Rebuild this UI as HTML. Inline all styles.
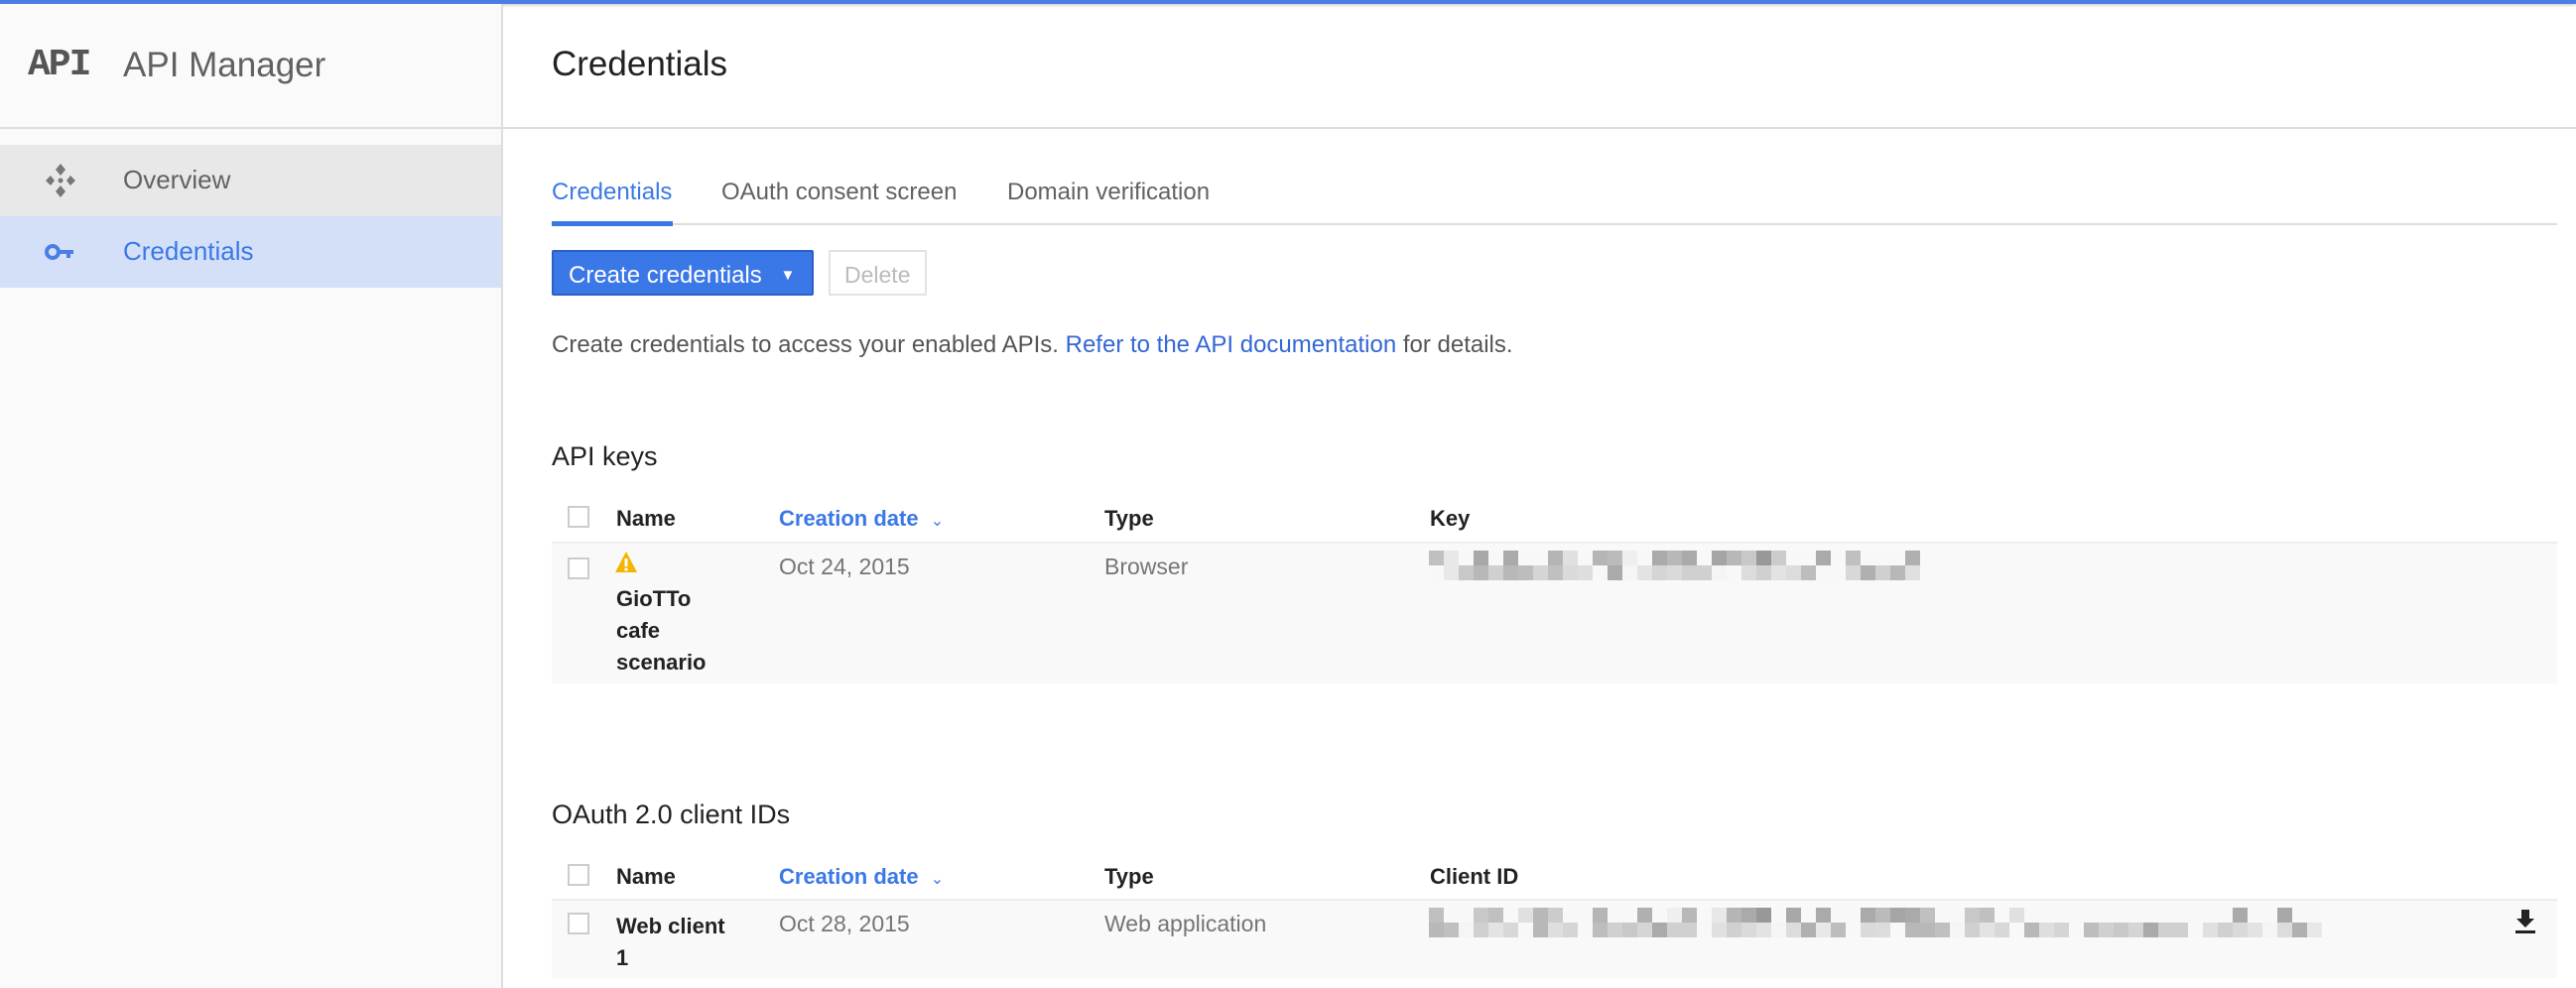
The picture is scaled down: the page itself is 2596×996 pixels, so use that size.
<!DOCTYPE html>
<html><head><meta charset="utf-8">
<style>
*{margin:0;padding:0;box-sizing:border-box}
body{width:2596px;height:996px;overflow:hidden;background:#fff;font-family:"Liberation Sans",Arial,sans-serif;position:relative}
.abs{position:absolute;white-space:nowrap}
#top{position:absolute;left:0;top:0;width:2596px;height:4px;background:#4a7ee6;box-shadow:0 1px 3px rgba(0,0,0,.25)}
#side{position:absolute;left:0;top:4px;width:507px;height:992px;background:#fafafa;border-right:2px solid #ddd}
.hline{position:absolute;height:2px;background:#ddd}
.row{position:absolute;left:0;width:505px;height:72px}
.cb{position:absolute;width:22px;height:22px;border:2px solid #ccc;background:#fff}
.th{font-size:22px;color:#222;font-weight:bold}
.td{font-size:23px;color:#757575}
.pix{position:absolute;display:flex;flex-direction:column}
.pix div{display:flex;height:15px}
.pix span{width:15px;height:15px}
</style></head><body>
<div id="top"></div>
<div id="side"></div>
<div class="hline" style="left:0;top:128px;width:2596px"></div>
<div class="abs" style="left:28px;top:44px;font-family:'Liberation Mono',monospace;font-weight:bold;font-size:38px;color:#555;letter-spacing:-2px">API</div>
<div class="abs" style="left:124px;top:46px;font-size:35px;color:#616161">API Manager</div>
<div class="row" style="top:146px;background:#e8e8e8"></div>
<div class="row" style="top:218px;background:#d3e0f8"></div>
<svg class="abs" style="left:44px;top:164px" width="34" height="36" viewBox="0 0 34 36"><g fill="#777"><path d="M17 1l5 6-5 6-5-6z"/><path d="M17 23l5 6-5 6-5-6z"/><path d="M2 18l5-5 4 5-4 5z"/><path d="M32 18l-5-5-4 5 4 5z"/><circle cx="17" cy="18" r="2.5"/></g></svg>
<svg class="abs" style="left:45px;top:244px" width="32" height="20" viewBox="0 0 32 20"><circle cx="8" cy="10" r="6" fill="none" stroke="#4a7ee6" stroke-width="4"/><rect x="13" y="8" width="16" height="4" fill="#4a7ee6"/><rect x="22" y="10" width="4" height="6" fill="#4a7ee6"/></svg>
<div class="abs" style="left:124px;top:166px;font-size:26px;color:#616161">Overview</div>
<div class="abs" style="left:124px;top:238px;font-size:26px;color:#3b78e7">Credentials</div>

<div class="abs" style="left:556px;top:45px;font-size:35px;color:#212121">Credentials</div>
<div class="abs" style="left:556px;top:180px;font-size:24px;color:#3b78e7">Credentials</div>
<div class="abs" style="left:727px;top:180px;font-size:24px;color:#616161">OAuth consent screen</div>
<div class="abs" style="left:1015px;top:180px;font-size:24px;color:#616161">Domain verification</div>
<div class="hline" style="left:556px;top:225px;width:2021px"></div>
<div class="abs" style="left:556px;top:223px;width:122px;height:5px;background:#3b78e7"></div>

<div class="abs" style="left:556px;top:252px;width:264px;height:46px;background:#3b78e7;border:2px solid #2a5fc9;border-radius:2px;color:#fff;font-size:24px;padding:10px 0 0 15px">Create credentials <span style="font-size:15px;margin-left:12px;vertical-align:3px">▼</span></div>
<div class="abs" style="left:835px;top:252px;width:99px;height:46px;border:2px solid #e3e3e3;color:#bbb;font-size:23px;padding:10px 0 0 14px;background:#fff">Delete</div>

<div class="abs" style="left:556px;top:334px;font-size:24px;color:#555">Create credentials to access your enabled APIs. <span style="color:#3367d6">Refer to the API documentation</span> for details.</div>

<div class="abs" style="left:556px;top:445px;font-size:27px;color:#212121">API keys</div>
<div class="cb" style="left:572px;top:510px"></div>
<div class="abs th" style="left:621px;top:510px">Name</div>
<div class="abs th" style="left:785px;top:510px;color:#3b78e7">Creation date <span style="font-weight:normal;font-size:16px;margin-left:6px">⌄</span></div>
<div class="abs th" style="left:1113px;top:510px">Type</div>
<div class="abs th" style="left:1441px;top:510px">Key</div>
<div class="abs" style="left:556px;top:546px;width:2021px;height:143px;background:#f9f9f9;border-top:2px solid #eee"></div>
<div class="cb" style="left:572px;top:562px"></div>
<svg class="abs" style="left:619px;top:555px" width="24" height="24" viewBox="0 0 24 24"><path d="M12 1L23 22H1z" fill="#f4b400"/><rect x="10.5" y="8" width="3" height="8" fill="#fff"/><rect x="10.5" y="17.5" width="3" height="3" fill="#fff"/></svg>
<div class="abs th" style="left:621px;top:588px;line-height:32px">GioTTo<br>cafe<br>scenario</div>
<div class="abs td" style="left:785px;top:558px">Oct 24, 2015</div>
<div class="abs td" style="left:1113px;top:558px">Browser</div>
<div class="pix" id="p1" style="left:1440px;top:555px"></div>

<div class="abs" style="left:556px;top:806px;font-size:27px;color:#212121">OAuth 2.0 client IDs</div>
<div class="cb" style="left:572px;top:871px"></div>
<div class="abs th" style="left:621px;top:871px">Name</div>
<div class="abs th" style="left:785px;top:871px;color:#3b78e7">Creation date <span style="font-weight:normal;font-size:16px;margin-left:6px">⌄</span></div>
<div class="abs th" style="left:1113px;top:871px">Type</div>
<div class="abs th" style="left:1441px;top:871px">Client ID</div>
<div class="abs" style="left:556px;top:906px;width:2021px;height:80px;background:#f9f9f9;border-top:2px solid #eee"></div>
<div class="cb" style="left:572px;top:920px"></div>
<div class="abs th" style="left:621px;top:918px;line-height:32px">Web client<br>1</div>
<div class="abs td" style="left:785px;top:918px">Oct 28, 2015</div>
<div class="abs td" style="left:1113px;top:918px">Web application</div>
<div class="pix" id="p2" style="left:1440px;top:915px"></div>
<svg class="abs" style="left:2533px;top:916px" width="24" height="26" viewBox="0 0 24 26"><path d="M8 1h8v9h5L12 19 3 10h5z" fill="#222"/><rect x="2" y="22" width="20" height="3" fill="#222"/></svg>

<script>
function build(id,r1,r2){var el=document.getElementById(id);[r1,r2].forEach(function(r){var d=document.createElement('div');r.forEach(function(c){var s=document.createElement('span');s.style.background='#'+c+c+c;d.appendChild(s)});el.appendChild(d)})}
var a=["c0","e8","f8","a8","f8","aa","f8","f8","b5","e0","f8","b5","bb","ef","f8","aa","b8","aa","f8","a5","b8","c8","98","cc","f8","f8","aa","f8","c0","f8","f8","f8","b0"];
var b=["f8","e8","c8","b8","d0","b8","bd","d5","c0","da","de","f8","aa","f5","e3","d5","da","d0","d0","f5","f8","dc","d0","e3","dc","bd","f8","f8","d8","b0","d0","b8","e0"];
build('p1',a,b);
var c=[],d=[];for(var i=0;i<60;i++){c.push(a[(i*7)%33]);d.push(b[(i*5+3)%33]);}
for(var i=40;i<60;i++){if(i%3)c[i]="f8";}
build('p2',c,d);
</script>
</body></html>
